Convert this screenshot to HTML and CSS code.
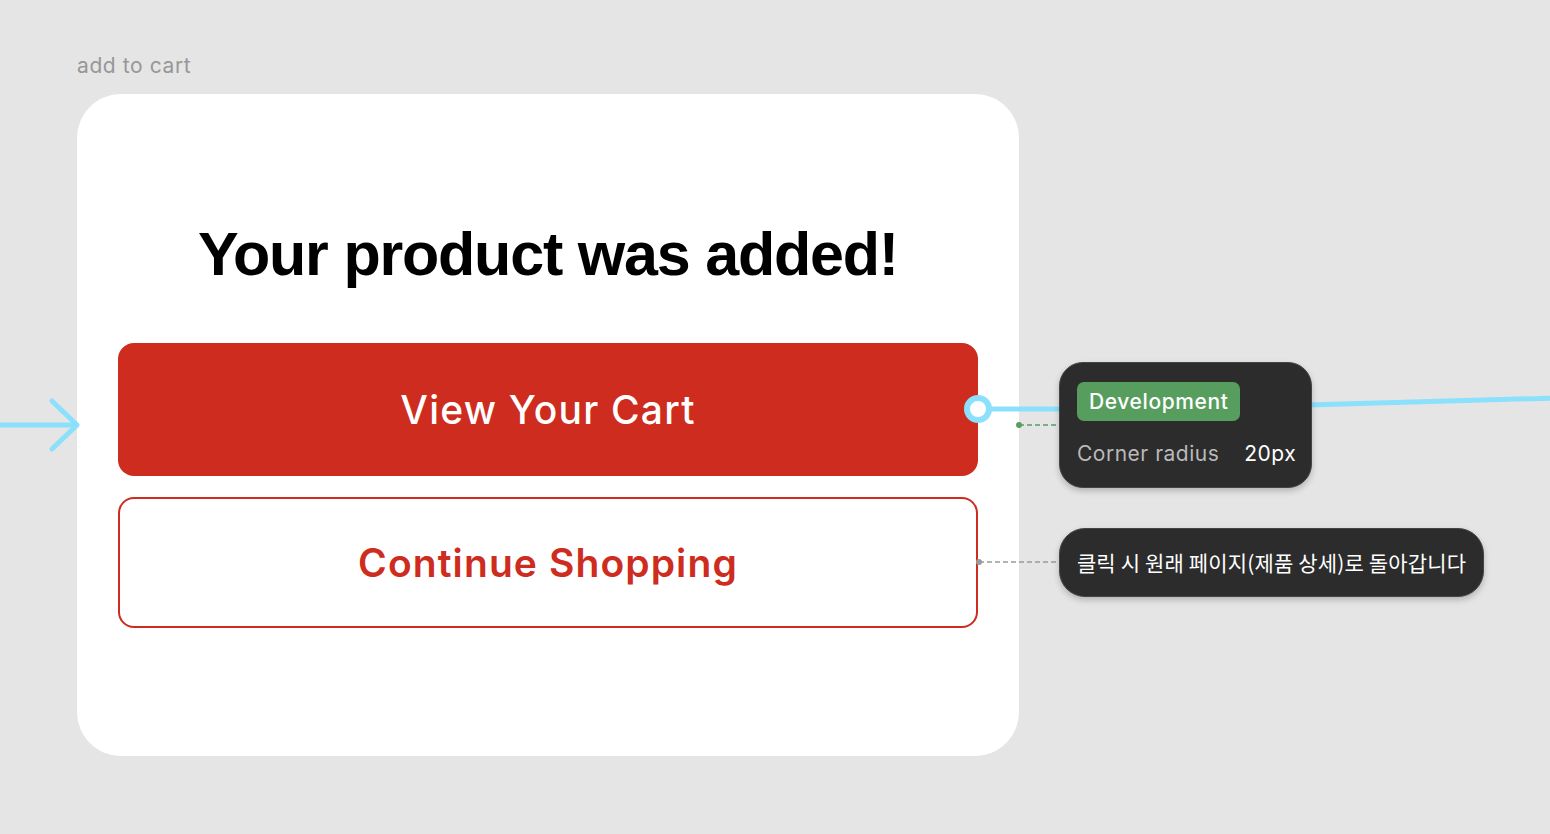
FILE: index.html
```html
<!DOCTYPE html>
<html lang="en">
<head>
<meta charset="utf-8">
<link rel="stylesheet" href="styles.css">
</head>
<body>
<div class="canvas">
  <div class="frame">
    <div class="frame-label">add to cart</div>
    <div class="card">
      <h1 class="title">Your product was added!</h1>
      <div class="actions">
        <button class="btn btn-primary">View Your Cart</button>
        <button class="btn btn-secondary">Continue Shopping</button>
      </div>
    </div>
  </div>

  <svg class="wires" width="1550" height="834" viewBox="0 0 1550 834">
    <g stroke="#8be1fb" stroke-width="5" fill="none" stroke-linecap="round" stroke-linejoin="round">
      <line x1="-5" y1="425" x2="76" y2="425"/>
      <polyline points="52,401 77,425 52,449"/>
      <line x1="990" y1="409" x2="1062" y2="409"/>
      <line x1="1308" y1="405" x2="1555" y2="398"/>
    </g>
    <circle cx="978" cy="409" r="11" fill="#fff" stroke="#8be1fb" stroke-width="6"/>
    <line x1="1019" y1="425" x2="1058" y2="425" stroke="#579e5e" stroke-width="1.5" stroke-dasharray="5 3"/>
    <circle cx="1019" cy="425" r="3" fill="#579e5e"/>
    <line x1="979" y1="562" x2="1058" y2="562" stroke="#9a9a9a" stroke-width="1.5" stroke-dasharray="5 3"/>
    <circle cx="979" cy="562" r="3" fill="#9a9a9a"/>
  </svg>

  <div class="note note-dev">
    <span class="badge">Development</span>
    <div class="prop"><span class="prop-key">Corner radius</span><span class="prop-val">20px</span></div>
  </div>

  <div class="note note-text">클릭 시 원래 페이지(제품 상세)로 돌아갑니다</div>
</div>
</body>
</html>
```

FILE: styles.css
```css
* { box-sizing: border-box; }
html, body {
  margin: 0;
  padding: 0;
  background: #e5e5e5;
  width: 1550px;
  height: 834px;
  overflow: hidden;
  font-family: Inter, "Noto Sans", sans-serif;
}
.canvas {
  position: relative;
  width: 1550px;
  height: 834px;
  padding: 52px 0 0 77px;
}
.frame {
  display: flex;
  flex-direction: column;
  width: 942px;
}
.frame-label {
  font-size: 21px;
  line-height: 28px;
  color: #979797;
  margin-bottom: 14px;
  letter-spacing: 0.6px;
}
.card {
  background: #fff;
  border-radius: 44px;
  height: 662px;
  padding: 122px 41px 0 41px;
  display: flex;
  flex-direction: column;
  align-items: stretch;
}
.title {
  margin: 0;
  text-align: center;
  font-family: "Liberation Sans", Arial, sans-serif;
  font-weight: 700;
  font-size: 61px;
  line-height: 76px;
  letter-spacing: -1.2px;
  color: #000;
}
.actions {
  margin-top: 51px;
  display: flex;
  flex-direction: column;
  gap: 21px;
}
.btn {
  display: flex;
  align-items: center;
  justify-content: center;
  height: 133px;
  border-radius: 16px;
  font-family: Inter, "Noto Sans", sans-serif;
  font-size: 39px;
  font-weight: 500;
  letter-spacing: 1.2px;
  cursor: pointer;
  width: 100%;
}
.btn-primary {
  background: #cd2c1e;
  color: #fff;
  border: none;
}
.btn-secondary {
  background: #fff;
  color: #cd2c1e;
  border: 2px solid #cd2c1e;
  height: 131px;
  font-weight: 600;
  letter-spacing: 1.1px;
}
.wires {
  position: absolute;
  left: 0;
  top: 0;
  pointer-events: none;
}
.note {
  position: absolute;
  background: #2c2c2c;
  border: 1.5px solid #454545;
  color: #fff;
  box-shadow: 0 3px 6px rgba(0,0,0,0.22);
}
.note-dev {
  left: 1059px;
  top: 362px;
  width: 253px;
  height: 126px;
  border-radius: 24px;
  padding: 19px 0 0 17px;
  display: flex;
  flex-direction: column;
  align-items: flex-start;
}
.badge {
  background: #579e5e;
  color: #fff;
  border-radius: 7px;
  font-size: 21px;
  font-weight: 500;
  line-height: 39px;
  padding: 0 12px;
  letter-spacing: 0.6px;
}
.prop {
  margin-top: 20px;
  display: flex;
  gap: 25px;
  font-size: 21px;
  line-height: 26px;
  letter-spacing: 0.5px;
  white-space: nowrap;
}
.prop-key { color: #b9b9b9; }
.prop-val { color: #fff; }
.note-text {
  left: 1059px;
  top: 528px;
  width: 425px;
  height: 69px;
  border-radius: 26px;
  display: flex;
  align-items: center;
  justify-content: center;
  font-family: "Noto Sans CJK KR", "Noto Sans", sans-serif;
  font-size: 21px;
  letter-spacing: 0.15px;
  padding-bottom: 2px;
}
```
